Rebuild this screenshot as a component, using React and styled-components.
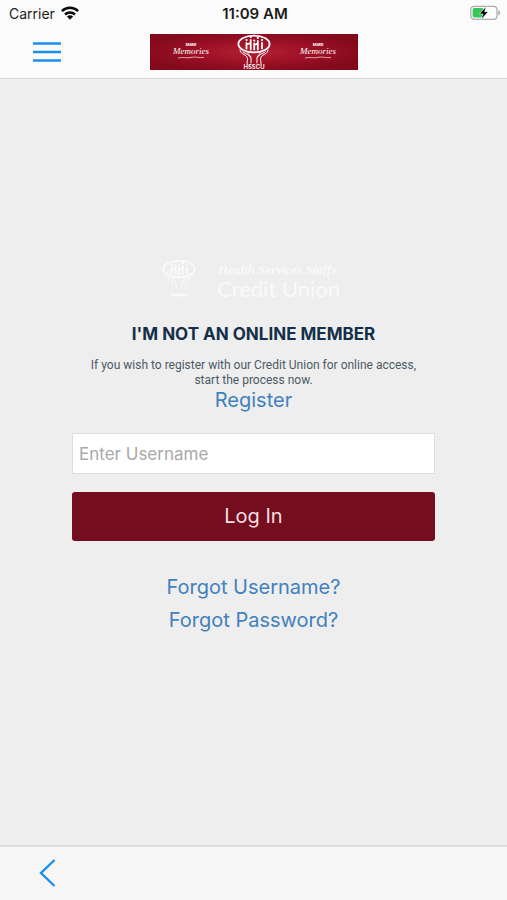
import React from 'react';
import styled, { createGlobalStyle } from 'styled-components';

const App = () => {
  return (
    <>
      <GlobalStyle />
      <Page>
        <Header>
          <StatusBar>
            <Carrier>
              Carrier
              <WifiIcon />
            </Carrier>
            <Time>11:09 AM</Time>
            <BatteryIcon />
          </StatusBar>
          <NavBar>
            <IconButton type='button' aria-label='Menu'>
              <svg width='28' height='22' viewBox='0 0 28 22'>
                <path
                  d='M0 2.5H28M0 11H28M0 19.5H28'
                  stroke='#1b8fee'
                  strokeWidth='2.6'
                />
              </svg>
            </IconButton>
            <Banner />
          </NavBar>
        </Header>
        <Main>
          <UnionLogo />
          <Title>I'M NOT AN ONLINE MEMBER</Title>
          <Description>
            If you wish to register with our Credit Union for online access,
            start the process now.
          </Description>
          <TextLink href='#register'>Register</TextLink>
          <Form onSubmit={(e) => e.preventDefault()}>
            <Input
              type='text'
              name='username'
              aria-label='Username'
              placeholder='Enter Username'
            />
            <LoginButton type='submit'>Log In</LoginButton>
          </Form>
          <Links>
            <TextLink href='#username'>Forgot Username?</TextLink>
            <TextLink href='#password'>Forgot Password?</TextLink>
          </Links>
        </Main>
        <Footer>
          <IconButton type='button' aria-label='Back'>
            <svg width='18' height='30' viewBox='0 0 18 30'>
              <path
                d='M16.5 2L3 15L16.5 28'
                fill='none'
                stroke='#1b8fee'
                strokeWidth='2.4'
              />
            </svg>
          </IconButton>
        </Footer>
      </Page>
    </>
  );
};

const WifiIcon = () => (
  <svg width='18' height='14' viewBox='0 0 18 14' aria-hidden='true'>
    <g fill='none' stroke='#0a0a0a' strokeWidth='2.5'>
      <path d='M0.9 5.2C5.4 0.7 12.6 0.7 17.1 5.2' />
      <path d='M4 8.5C6.8 5.7 11.2 5.7 14 8.5' />
    </g>
    <path d='M9 13.7L5.9 10.6C7.6 8.9 10.4 8.9 12.1 10.6Z' fill='#0a0a0a' />
  </svg>
);

const BatteryIcon = () => (
  <svg width='31' height='16' viewBox='0 0 31 16' aria-hidden='true'>
    <rect
      x='0.8'
      y='1.3'
      width='26.2'
      height='13'
      rx='3.4'
      fill='#fdfdfd'
      stroke='#adadad'
      strokeWidth='1.3'
    />
    <rect x='2.6' y='3.1' width='11' height='9.4' rx='1.8' fill='#35c759' />
    <path d='M28.3 5.2C30.8 6.3 30.8 9.3 28.3 10.4Z' fill='#adadad' />
    <path
      d='M16.2 1.4L9.3 8.9H13L11.2 14.4L18.4 6.7H14.6Z'
      fill='#000'
      stroke='#fdfdfd'
      strokeWidth='0.6'
    />
  </svg>
);

// People in a ring held up by two hands
const Emblem = () => (
  <g fill='none' stroke='#fff' strokeLinecap='round'>
    <ellipse cx='17' cy='10' rx='15.6' ry='8.4' strokeWidth='1.8' />
    <path
      d='M9.5 9V14.5M13.7 6V15.5M17.2 9.5V15.5M20.8 7V15.5M25 9V14.5M9.5 10.5L13.7 9M17.2 11L20.8 9.5'
      strokeWidth='1.8'
    />
    <path
      d='M9.5 6V6.1M13.7 2.8V2.9M17.2 6.5V6.6M20.8 3.8V3.9M25 6V6.1'
      strokeWidth='2.2'
    />
    <path
      d='M3 16C3 20 8 20 10 23C11 25 10 27 10 30M6 18C9 20 13 21 14 24V29M11 19.5L14 23M31 16C31 20 26 20 24 23C23 25 24 27 24 30M28 18C25 20 21 21 20 24V29M23 19.5L20 23'
      strokeWidth='1'
    />
  </g>
);

const Slogan = ({ x }) => (
  <g transform={`translate(${x} 0)`} fill='#fff' textAnchor='middle'>
    <text y='12' fontSize='4' fontWeight='700'>
      Make
    </text>
    <text y='20' fontSize='9' fontStyle='italic' fontFamily='Liberation Serif, serif'>
      Memories
    </text>
    <path
      d='M-13 24C-8 22.6 -4 24.6 0 23.4S9 24.4 13 23.4'
      fill='none'
      stroke='#f0c4cb'
      strokeWidth='0.8'
    />
  </g>
);

const Banner = () => (
  <BannerSvg viewBox='0 0 208 36' role='img' aria-label='HSSCU'>
    <defs>
      <radialGradient id='banner' cx='0.5' cy='0.5' r='0.55'>
        <stop offset='0' stopColor='#b51f34' />
        <stop offset='0.6' stopColor='#990f24' />
        <stop offset='1' stopColor='#830a1b' />
      </radialGradient>
    </defs>
    <rect width='208' height='36' fill='url(#banner)' />
    <Slogan x={41} />
    <g transform='translate(87 0)'>
      <Emblem />
    </g>
    <text x='104' y='35' fontSize='6' fontWeight='600' fill='#fff' textAnchor='middle'>
      HSSCU
    </text>
    <Slogan x={168} />
  </BannerSvg>
);

const UnionLogo = () => (
  <LogoSvg
    viewBox='0 0 186 44'
    role='img'
    aria-label='Health Services Staffs Credit Union'
  >
    <g transform='translate(1 1)' opacity='0.75'>
      <Emblem />
    </g>
    <path d='M10 37H27' stroke='#fff' strokeWidth='3' opacity='0.6' />
    <path d='M48 5V39' stroke='#fff' opacity='0.2' />
    <text
      x='57'
      y='16'
      fontFamily='Liberation Serif, serif'
      fontSize='13'
      fontStyle='italic'
      fontWeight='700'
      fill='#fff'
      opacity='0.7'
    >
      Health Services Staffs
    </text>
    <text
      x='56'
      y='39'
      fontFamily='Lato, sans-serif'
      fontSize='22'
      fill='#fff'
      opacity='0.7'
    >
      Credit Union
    </text>
  </LogoSvg>
);

const GlobalStyle = createGlobalStyle`
  * {
    box-sizing: border-box;
  }
  body {
    margin: 0;
    background: #eeeeee;
    font-family: Inter, 'Liberation Sans', sans-serif;
  }
  svg {
    display: block;
  }
`;

const Page = styled.div`
  display: flex;
  flex-direction: column;
  min-height: 100vh;
`;

const Header = styled.header`
  background: #fbfbfb;
  border-bottom: 1px solid #d4d4d4;
`;

const StatusBar = styled.div`
  display: grid;
  grid-template-columns: 1fr auto 1fr;
  align-items: center;
  height: 26px;
  padding: 0 6px 0 9px;
  color: #1c1c1c;
  font-size: 14px;
  > :last-child {
    justify-self: end;
  }
`;

const Carrier = styled.div`
  display: flex;
  align-items: center;
  gap: 6px;
`;

const Time = styled.div`
  font-size: 15px;
  font-weight: 600;
`;

const NavBar = styled.nav`
  display: grid;
  grid-template-columns: 1fr auto 1fr;
  align-items: center;
  height: 52px;
  padding: 0 33px;
`;

const IconButton = styled.button`
  justify-self: start;
  padding: 0;
  border: none;
  background: none;
  cursor: pointer;
`;

const BannerSvg = styled.svg`
  width: 208px;
  height: 36px;
`;

const Main = styled.main`
  display: flex;
  flex: 1;
  flex-direction: column;
  align-items: center;
  padding: 179px 72px 32px;
  text-align: center;
`;

const LogoSvg = styled.svg`
  width: 186px;
  height: 44px;
`;

const Title = styled.h1`
  margin: 20px 0 12px;
  color: #132f49;
  font-size: 17px;
  font-weight: 700;
  line-height: 24px;
`;

const Description = styled.p`
  margin: 0;
  padding: 0 12px;
  color: #4b5a66;
  font-family: Roboto, sans-serif;
  font-size: 12px;
  line-height: 15px;
`;

const TextLink = styled.a`
  color: #4281bd;
  font-size: 20px;
  line-height: 25px;
  text-decoration: none;
`;

const Form = styled.form`
  display: flex;
  flex-direction: column;
  gap: 18px;
  width: 100%;
  margin-top: 20px;
`;

const Input = styled.input`
  width: 100%;
  height: 41px;
  padding: 0 6px;
  border: 1px solid #dddddd;
  border-radius: 0;
  background: #fff;
  font-family: inherit;
  font-size: 17px;
  &::placeholder {
    color: #a9a9a9;
    opacity: 1;
  }
`;

const LoginButton = styled.button`
  height: 49px;
  padding-bottom: 3px;
  border: none;
  border-radius: 3px;
  background: #740d1d;
  color: #f7dfe2;
  font-family: inherit;
  font-size: 20px;
  cursor: pointer;
`;

const Links = styled.div`
  display: flex;
  flex-direction: column;
  gap: 8px;
  margin-top: 34px;
`;

const Footer = styled.footer`
  display: flex;
  align-items: center;
  height: 55px;
  padding: 0 38px 2px;
  border-top: 2px solid #dcdcdc;
  background: #f6f6f6;
`;

export default App;
